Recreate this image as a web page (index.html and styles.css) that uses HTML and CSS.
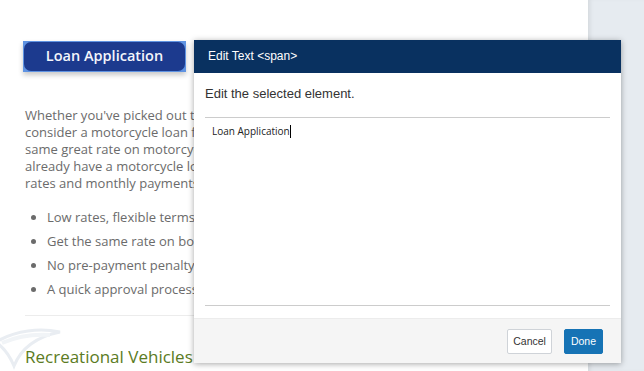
FILE: index.html
```html
<!DOCTYPE html>
<html lang="en">
<head>
  <meta charset="UTF-8" />
  <title>Motorcycle Loans - Edit</title>
  <link rel="stylesheet" href="styles.css">
</head>
<body>
  <div class="page">
    <div class="content">
      <svg class="watermark" width="70" height="60" viewBox="0 0 70 60">
        <path d="M2 20 C22 8 46 6 66 10 C46 14 28 24 20 44 C16 34 10 26 2 20 Z" fill="none" stroke="#e9edf2" stroke-width="3"/>
        <path d="M8 21 C24 14 40 12 56 13" stroke="#f1f4f7" stroke-width="4" fill="none"/>
      </svg>
      <div class="btn-wrap">
        <span class="loan-btn">Loan Application</span>
      </div>
      <p class="intro">Whether you've picked out the bike of your dreams or are still shopping,<br>
        consider a motorcycle loan from us first. You'll get the<br>
        same great rate on motorcycles as you would on a new car.<br>
        already have a motorcycle loan elsewhere, refinance for lower<br>
        rates and monthly payments.</p>
      <ul class="perks">
        <li>Low rates, flexible terms</li>
        <li>Get the same rate on both new and used</li>
        <li>No pre-payment penalty</li>
        <li>A quick approval process</li>
      </ul>
      <hr class="divider">
      <h3 class="section-title">Recreational Vehicles</h3>
    </div>
    <div class="side"></div>
  </div>

  <div class="modal">
    <div class="modal-head">Edit Text &lt;span&gt;</div>
    <div class="modal-body">
      <div class="hint">Edit the selected element.</div>
      <div class="editor"><span>Loan Application</span><span class="caret"></span></div>
    </div>
    <div class="modal-foot">
      <button class="btn cancel">Cancel</button>
      <button class="btn done">Done</button>
    </div>
  </div>
</body>
</html>
```

FILE: styles.css
```css
html, body {
  margin: 0;
  height: 100%;
  overflow: hidden;
}
body {
  font-family: "Open Sans", sans-serif;
  background: #ffffff;
}
.page {
  display: flex;
  height: 371px;
}
.content {
  position: relative;
  width: 563px;
  padding: 41px 0 0 25px;
  background: #ffffff;
  overflow: hidden;
}
.side {
  flex: 1;
  background: #e6ebf0;
  box-shadow: inset 4px 0 4px -2px rgba(0,0,0,0.08);
}
.btn-wrap {
  position: relative;
  display: inline-block;
  margin-left: -2px;
  padding: 1px;
  background: #5f93e2;
  box-shadow: 0 3px 5px rgba(0,0,0,0.22);
}
.loan-btn {
  display: block;
  width: 161px;
  height: 29px;
  line-height: 28px;
  text-align: center;
  background: #1c3a8e;
  color: #f4f6fb;
  font-size: 14.5px;
  font-weight: 600;
  border-radius: 7px;
}
.intro {
  margin: 35px 0 0;
  font-size: 13px;
  line-height: 17px;
  color: #6b6b6b;
  white-space: nowrap;
}
.perks {
  margin: 17px 0 0;
  padding-left: 22px;
  font-size: 13px;
  color: #6b6b6b;
}
.perks li {
  line-height: 17px;
  margin-bottom: 7px;
}
.divider {
  margin: 17px 0 0;
  width: 540px;
  border: 0;
  border-top: 1px solid #ececec;
}
.section-title {
  position: relative;
  margin: 29px 0 0;
  font-size: 17px;
  font-weight: 400;
  color: #5b7b23;
}
.watermark {
  position: absolute;
  left: -6px;
  top: 322px;
}
.modal {
  position: absolute;
  left: 194px;
  top: 40px;
  width: 427px;
  height: 323px;
  display: flex;
  flex-direction: column;
  background: #ffffff;
  box-shadow: 0 1px 6px rgba(0,0,0,0.35);
  font-family: "Liberation Sans", Arial, sans-serif;
}
.modal-head {
  height: 33px;
  line-height: 32px;
  padding-left: 14px;
  background: #093160;
  color: #ffffff;
  font-size: 12px;
}
.modal-body {
  flex: 1;
  padding: 0 11px;
}
.hint {
  padding: 13px 0 0;
  height: 31px;
  font-size: 13px;
  color: #333333;
  border-bottom: 1px solid #cccccc;
}
.editor {
  height: 181px;
  padding: 6px 0 0 7px;
  font-family: "Open Sans", sans-serif;
  font-size: 10px;
  color: #222222;
  border-bottom: 1px solid #cccccc;
}
.caret {
  display: inline-block;
  width: 1px;
  height: 13px;
  background: #000000;
  vertical-align: -3px;
}
.modal-foot {
  height: 44px;
  display: flex;
  justify-content: flex-end;
  align-items: center;
  gap: 12px;
  padding-right: 18px;
  background: #f5f5f5;
  border-top: 1px solid #ececec;
}
.btn {
  height: 25px;
  padding: 0 5px;
  font-family: "Liberation Sans", Arial, sans-serif;
  font-size: 10.5px;
  border-radius: 2px;
}
.cancel {
  background: #ffffff;
  color: #333333;
  border: 1px solid #cfd3d8;
}
.done {
  padding: 0 6px;
  background: #1673b5;
  color: #ffffff;
  border: 1px solid #1673b5;
}
```
